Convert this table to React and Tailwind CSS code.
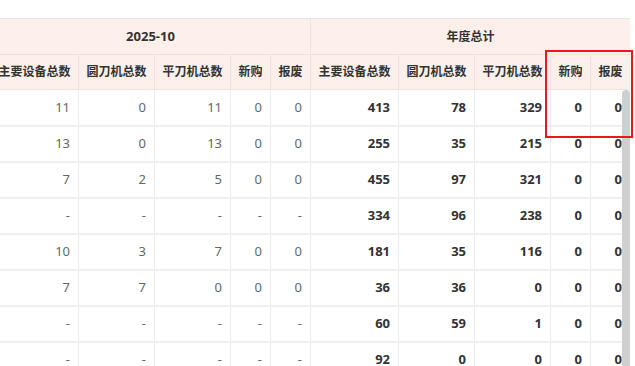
import React from "react";

const cols = [88, 76, 76, 40, 40, 88, 76, 76, 40, 40];
const subHeads = ["主要设备总数", "圆刀机总数", "平刀机总数", "新购", "报废"];

const rows = [
    [["11", "0", "11", "0", "0"], ["413", "78", "329", "0", "0"]],
    [["13", "0", "13", "0", "0"], ["255", "35", "215", "0", "0"]],
    [["7", "2", "5", "0", "0"], ["455", "97", "321", "0", "0"]],
    [["-", "-", "-", "-", "-"], ["334", "96", "238", "0", "0"]],
    [["10", "3", "7", "0", "0"], ["181", "35", "116", "0", "0"]],
    [["7", "7", "0", "0", "0"], ["36", "36", "0", "0", "0"]],
    [["-", "-", "-", "-", "-"], ["60", "59", "1", "0", "0"]],
    [["-", "-", "-", "-", "-"], ["92", "0", "0", "0", "0"]],
];

const App = () => {
    return (
        <div
            className="relative w-[635px] h-[366px] overflow-hidden bg-white pt-[18px]"
            style={{ fontFamily: '"Noto Sans", "Noto Sans CJK SC", sans-serif' }}
        >
            <div className="w-[630px] overflow-hidden">
                <table className="ml-[-10px] w-[640px] table-fixed border-collapse">
                    <colgroup>
                        {cols.map((w, i) => (
                            <col key={i} style={{ width: w }} />
                        ))}
                    </colgroup>
                    <thead>
                        <tr className="h-[36px] bg-[#fdefe9]">
                            <th colSpan={5} className="border border-[#ebe3df] text-[13px] font-bold text-[#333]">
                                2025-10
                            </th>
                            <th colSpan={5} className="border border-[#ebe3df] text-[12px] font-bold text-[#333]">
                                年度总计
                            </th>
                        </tr>
                        <tr className="h-[35px] bg-[#fdefe9]">
                            {[...subHeads, ...subHeads].map((h, i) => (
                                <th
                                    key={i}
                                    className="border border-[#ebe3df] px-0 text-center text-[12px] font-bold whitespace-nowrap text-[#333]"
                                >
                                    {h}
                                </th>
                            ))}
                        </tr>
                    </thead>
                    <tbody>
                        {rows.map((r, ri) => (
                            <tr key={ri} className="h-[36px]">
                                {r[0].map((v, i) => (
                                    <td
                                        key={"a" + i}
                                        className="border-x border-b-2 border-x-[#ececec] border-b-[#f0f0f0] pr-[8px] text-right text-[13px] text-[#666]"
                                    >
                                        {v}
                                    </td>
                                ))}
                                {r[1].map((v, i) => (
                                    <td
                                        key={"b" + i}
                                        className="border-x border-b-2 border-x-[#ececec] border-b-[#f0f0f0] pr-[8px] text-right text-[13px] font-bold text-[#333]"
                                    >
                                        {v}
                                    </td>
                                ))}
                            </tr>
                        ))}
                    </tbody>
                </table>
            </div>
            {/* scrollbar thumb */}
            <div className="absolute left-[622px] top-[90px] h-[290px] w-[8px] rounded-t-[4px] bg-[#cfcfcf]" />
            {/* highlight box */}
            <div className="absolute left-[545px] top-[50px] h-[88px] w-[88px] border-2 border-[#e8191e]" />
        </div>
    );
};

export default App;
